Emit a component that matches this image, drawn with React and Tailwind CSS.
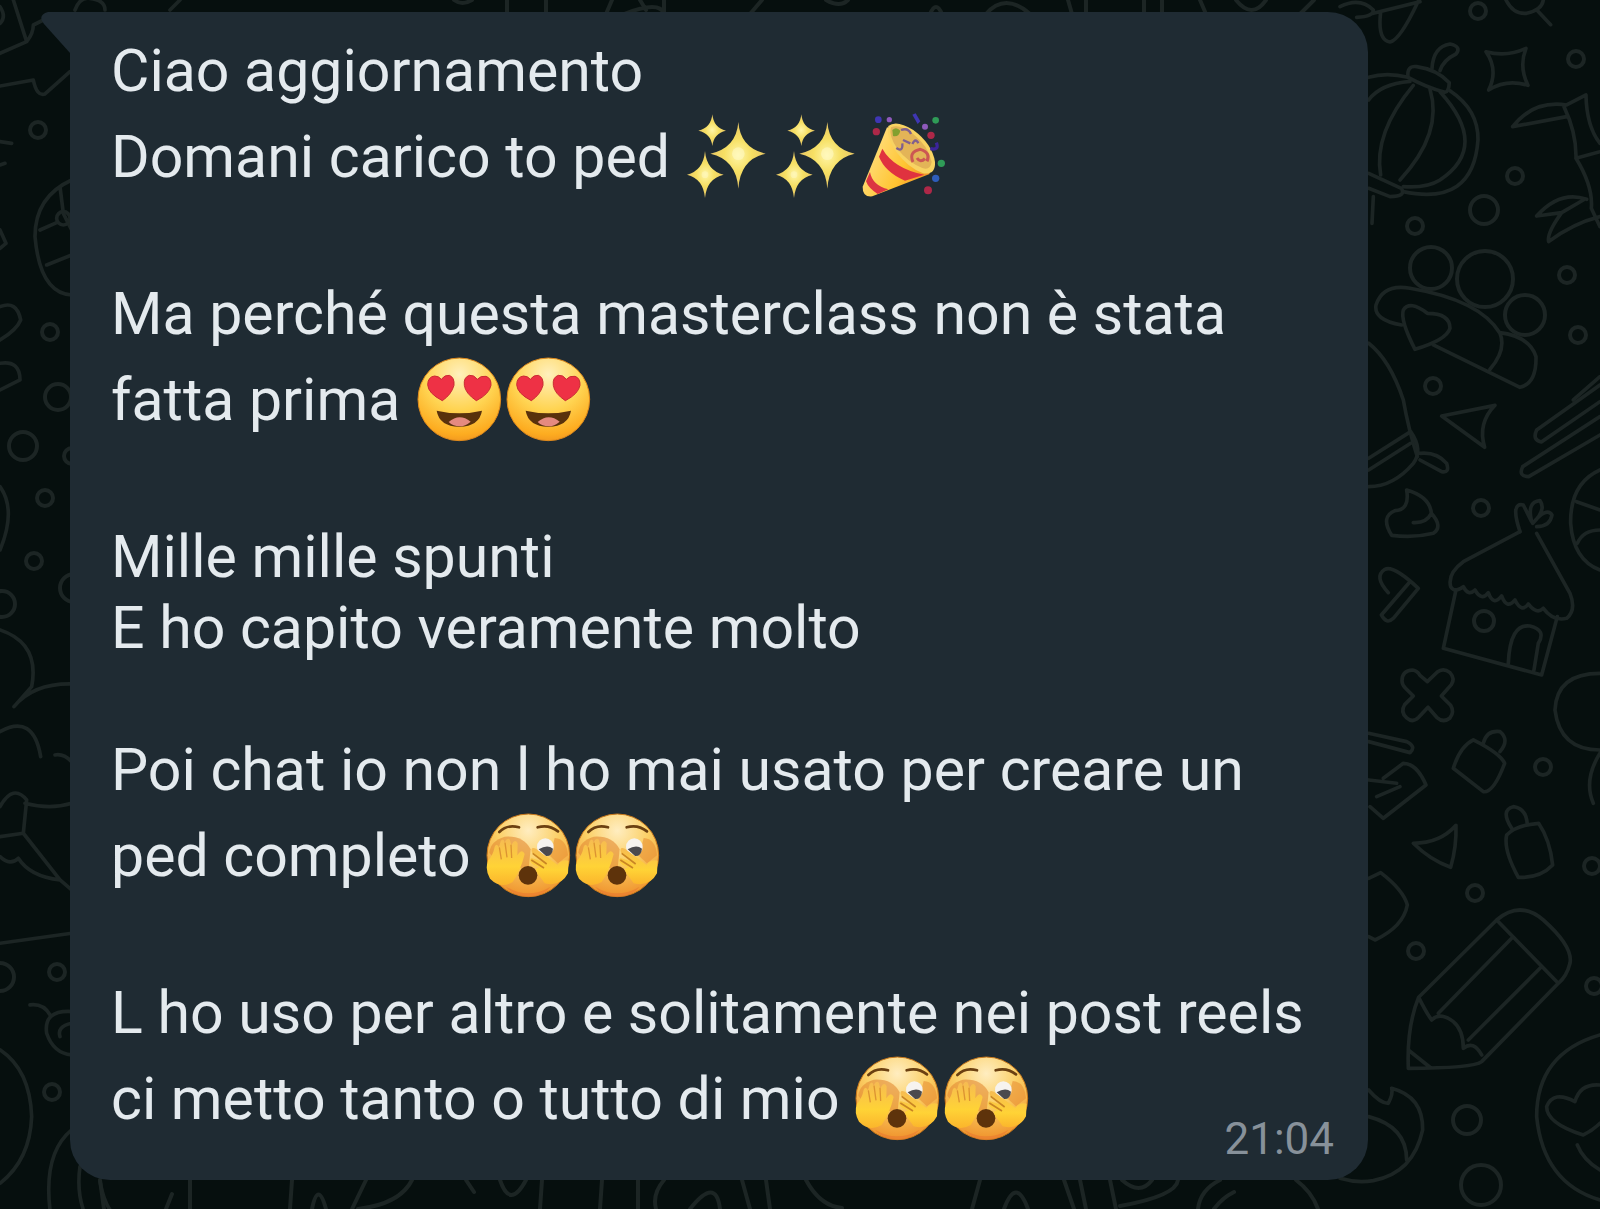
import React from 'react';

const message = [
    { text: 'Ciao aggiornamento' },
    { text: 'Domani carico to ped ', emojis: ['sparkles', 'sparkles', 'party'] },
    { text: '' },
    { text: 'Ma perché questa masterclass non è stata' },
    { text: 'fatta prima ', emojis: ['hearts', 'hearts'] },
    { text: '' },
    { text: 'Mille mille spunti' },
    { text: 'E ho capito veramente molto' },
    { text: '' },
    { text: 'Poi chat io non l ho mai usato per creare un' },
    { text: 'ped completo ', emojis: ['peeking', 'peeking'] },
    { text: '' },
    { text: 'L ho uso per altro e solitamente nei post reels' },
    { text: 'ci metto tanto o tutto di mio ', emojis: ['peeking', 'peeking'] }
];

function Sparkles() {
    return (
        <g transform="translate(-30 -38)" fill="url(#star)">
            <path d="M190 68 Q196 146 272 163 Q196 180 190 268 Q184 180 106 163 Q184 146 190 68Z" />
            <path d="M90 155 Q95 214 146 226 Q95 238 90 296 Q85 238 36 226 Q85 214 90 155Z" />
            <path d="M112 45 Q116 86 153 94 Q116 102 112 140 Q108 102 70 94 Q108 86 112 45Z" />
            <circle cx="190" cy="163" r="19" fill="#fffbd0" opacity="0.5" />
            <circle cx="90" cy="226" r="10" fill="#fffbd0" opacity="0.4" />
        </g>
    );
}

function Party() {
    return (
        <g transform="translate(-564 -38)">
            <path d="M636 84 L563 262 Q562 294 592 291 L764 224 Q735 110 636 84Z" fill="url(#cone)" />
            <path d="M612 172 Q630 218 690 244 L748 226 Q656 208 622 148Z" fill="#e0323f" />
            <path d="M585 218 Q592 258 640 270 L608 284 Q580 266 573 246Z" fill="#dc3442" />
            <path d="M640 80 Q664 60 715 92 Q772 134 780 188 Q782 228 744 222 Q700 206 664 158 Q632 112 640 80Z" fill="#f8d362" />
            <path d="M648 84 Q672 72 712 102 Q762 142 770 188 Q766 214 742 206 Q700 190 668 150 Q640 110 648 84Z" fill="#e3b457" />
            <path d="M652 92 Q664 80 676 94 Q672 114 654 110Z" fill="#83a02e" />
            <path d="M678 92 Q700 84 708 104 M664 146 Q684 160 682 132 M684 122 L706 132 M712 134 Q722 114 730 132" fill="none" stroke="#80608e" strokeWidth="7" />
            <path d="M714 188 Q700 158 736 150 Q768 160 756 186 M726 176 Q736 192 750 178" fill="none" stroke="#cc5753" strokeWidth="9" />
            <path d="M766 148 Q794 154 784 130" fill="none" stroke="#3b249a" strokeWidth="10" />
            <g fill="#3f36b4">
                <circle cx="610" cy="61" r="10" />
                <path d="M712 46 L722 42 L736 66 L728 74Z" />
                <circle cx="782" cy="237" r="11" fill="#2e5dba" />
            </g>
            <g fill="#8f5abc">
                <circle cx="643" cy="61" r="8" />
                <circle cx="750" cy="82" r="9" />
            </g>
            <g fill="#2f9b57">
                <circle cx="782" cy="63" r="10" />
                <circle cx="799" cy="192" r="11" />
            </g>
            <g fill="#ad2848">
                <circle cx="604" cy="97" r="11" />
                <circle cx="768" cy="108" r="11" />
                <circle cx="759" cy="273" r="12" />
            </g>
        </g>
    );
}

function Hearts() {
    return (
        <g transform="translate(-45 -29)">
            <circle cx="178" cy="162" r="124" fill="url(#face)" stroke="#e08a1c" strokeWidth="3" />
            <g fill="#ee3145" stroke="#c92b32" strokeWidth="3">
                <path d="M127 166 Q84 144 83 118 Q84 94 104 92 Q116 92 124 102 Q134 88 148 90 Q164 96 162 120 Q154 148 127 166Z" />
                <path d="M229 166 Q196 144 193 120 Q190 96 208 90 Q222 88 232 102 Q242 90 258 93 Q274 98 273 120 Q268 146 229 166Z" />
            </g>
            <path d="M110 196 Q178 212 246 196 Q238 243 178 244 Q118 243 110 196Z" fill="#59310c" />
            <path d="M146 230 Q178 202 212 229 Q196 243 178 243 Q160 243 146 230Z" fill="#e58a80" />
        </g>
    );
}

function Peeking() {
    return (
        <g transform="translate(-45 -35)">
            <circle cx="175" cy="168" r="124" fill="url(#peek)" stroke="#c9781b" strokeWidth="3" />
            <path d="M58 160 Q62 124 104 112 Q160 108 182 150 L176 206 Q90 210 58 160Z" fill="#e28a33" opacity="0.6" />
            <path d="M254 116 Q290 118 294 168 L264 192 L240 170Z" fill="#e88f35" opacity="0.6" />
            <path d="M88 98 Q112 74 147 84 M203 84 Q236 74 264 96" fill="none" stroke="#6b4011" strokeWidth="8" strokeLinecap="round" />
            <ellipse cx="226" cy="143" rx="25" ry="26" fill="#f6f3ef" />
            <path d="M206 150 Q232 134 249 148 Q246 172 228 170Z" fill="#4b4a4e" />
            <ellipse cx="174" cy="228" rx="28" ry="28" fill="#5e330b" />
            <path d="M54 184 Q70 166 74 142 Q80 130 87 144 L92 126 Q100 114 104 130 L108 122 Q119 112 122 130 L124 138 Q135 116 143 132 L142 168 Q156 146 164 164 Q152 214 128 248 Q92 270 60 238 Q44 210 54 184Z" fill="url(#hand)" />
            <path d="M88 144 L94 180 M105 130 L111 174 M123 136 L125 176" fill="none" stroke="#dc9432" strokeWidth="4" />
            <path d="M296 184 Q276 178 262 196 L198 148 Q180 140 186 160 L222 188 L184 176 Q174 184 190 196 L208 204 Q190 206 204 224 L224 252 Q272 264 294 222Z" fill="url(#hand)" />
            <path d="M188 162 L230 194 M184 182 L222 206" fill="none" stroke="#c98524" strokeWidth="5" />
            <path d="M108 262 Q174 302 242 262 Q220 292 175 292 Q130 292 108 262Z" fill="#ea7d30" opacity="0.7" />
        </g>
    );
}

const emojiTypes = {
    sparkles: { label: '✨', Drawing: Sparkles },
    party: { label: '🎉', Drawing: Party },
    hearts: { label: '😍', Drawing: Hearts },
    peeking: { label: '🫣', Drawing: Peeking }
};

function Emoji({ name }) {
    const { label, Drawing } = emojiTypes[name];
    return (
        <svg role="img" aria-label={label} viewBox="0 0 267 267" className="h-[89px] w-[89px] shrink-0 overflow-visible">
            <Drawing />
        </svg>
    );
}

// Small rings scattered between the bigger doodles: [cx, cy, r]
const rings = [
    [1478, 11, 8], [1576, 59, 8], [1515, 176, 8], [1484, 210, 14], [1415, 226, 8],
    [1567, 275, 8], [1578, 335, 8], [1433, 386, 8], [1481, 508, 8], [1543, 767, 8],
    [1592, 866, 8], [1475, 893, 8], [1416, 951, 8], [1594, 986, 8], [1467, 1120, 14],
    [1481, 1185, 20], [1431, 268, 21], [1485, 279, 28], [1525, 315, 20], [1484, 621, 10],
    [38, 130, 8], [50, 332, 8], [58, 397, 13], [23, 446, 14], [45, 498, 8],
    [34, 561, 8], [2, 604, 13], [74, 588, 14], [57, 972, 8], [0, 977, 14],
    [52, 1092, 8], [72, 456, 8]
];

function Wallpaper() {
    return (
        <svg
            width="1600"
            height="1209"
            fill="none"
            stroke="#1c2524"
            strokeWidth="4"
            strokeLinecap="round"
            strokeLinejoin="round"
            className="absolute top-0 left-0"
            aria-hidden="true"
        >
            <defs>
                <radialGradient id="star">
                    <stop offset="0" stopColor="#fff6a8" />
                    <stop offset="0.5" stopColor="#f6df63" />
                    <stop offset="1" stopColor="#e8c765" />
                </radialGradient>
                <linearGradient id="cone" x1="0" y1="0.3" x2="1" y2="0.8">
                    <stop offset="0" stopColor="#ffe288" />
                    <stop offset="0.6" stopColor="#ffc431" />
                    <stop offset="1" stopColor="#ee8b25" />
                </linearGradient>
                <radialGradient id="face" cx="0.5" cy="0.2" r="0.85">
                    <stop offset="0" stopColor="#fff0bd" />
                    <stop offset="0.5" stopColor="#ffd452" />
                    <stop offset="0.85" stopColor="#fdac20" />
                    <stop offset="1" stopColor="#ee9020" />
                </radialGradient>
                <radialGradient id="peek" cx="0.5" cy="0.2" r="0.85">
                    <stop offset="0" stopColor="#ffedc0" />
                    <stop offset="0.45" stopColor="#fbcf64" />
                    <stop offset="1" stopColor="#ee8b25" />
                </radialGradient>
                <linearGradient id="hand" x1="0" y1="0" x2="0" y2="1">
                    <stop offset="0" stopColor="#f6bb52" />
                    <stop offset="0.6" stopColor="#ffd336" />
                    <stop offset="1" stopColor="#fbb52c" />
                </linearGradient>
            </defs>

            {rings.map(([cx, cy, r]) => (
                <circle key={`${cx}-${cy}`} cx={cx} cy={cy} r={r} />
            ))}

            {/* right side, top */}
            <g transform="translate(1340 0) scale(0.3333)" strokeWidth="11">
                <path d="M0 20 Q60 -10 100 30 Q100 50 50 52 M100 40 L240 5 M122 36 Q112 120 150 126 Q180 120 234 5" />
                <path d="M498 0 Q520 44 560 40 Q606 30 610 0 M594 34 L632 74" />
                <path d="M438 155 Q500 172 558 145 Q536 200 564 256 Q500 236 446 270 Q476 210 438 155Z" />
                <path d="M276 205 Q280 140 330 132 Q366 140 348 162 Q310 180 300 212" />
                <path d="M204 232 Q200 196 230 200 Q290 208 328 248 Q326 280 312 276 Q260 262 204 232Z" />
                <path d="M86 232 Q140 216 204 232 M86 300 Q120 252 210 244 M220 256 Q100 400 122 525 M270 268 Q310 400 180 540 M300 275 Q450 440 300 540 Q260 565 190 560 M330 272 Q416 330 414 420 Q400 620 190 575" />
                <path d="M86 520 L184 565 Q200 590 150 590 L86 565 M100 590 L96 670" />
                <path d="M518 380 Q580 300 680 315 L738 285 Q740 380 780 430 M518 380 L680 350 M672 320 Q710 400 708 475 L780 455 M708 475 Q760 560 754 625 M590 648 Q660 570 740 598 M590 648 L665 638 Q620 700 626 725 Q700 670 780 650 M665 638 L730 600 M754 625 L780 680" />
                <path d="M185 975 Q100 960 108 915 Q130 850 210 865 Q420 900 480 1000 Q500 1050 450 1108 M280 1035 L540 1162 Q590 1150 588 1070 Q570 1010 480 998" />
                <path d="M225 1048 Q180 960 190 930 Q210 900 262 940 Q330 940 330 985 Q320 1020 225 1048Z" />
                <path d="M86 1030 Q150 1080 190 1200 Q206 1290 232 1370 M700 1200 L780 1130" />
            </g>

            {/* right side, middle */}
            <g transform="translate(1340 380) scale(0.3333)" strokeWidth="11">
                <path d="M305 108 L465 76 Q412 130 434 202Z" />
                <path d="M780 15 L590 150 Q576 180 604 186 L780 65 M780 110 L548 260 Q534 290 566 290 L780 165" />
                <path d="M86 235 L212 155 Q250 210 220 250 Q160 320 86 320 M86 270 L212 190 M240 220 Q290 215 320 250 Q330 280 305 275 L240 240" />
                <path d="M200 330 Q270 350 274 400 Q310 440 280 460 Q220 475 155 466 Q120 410 165 392 Q210 390 200 330Z M220 428 Q260 430 274 400" />
                <path d="M145 638 Q100 590 135 568 Q160 555 235 625 L160 715 Q140 735 124 705 L206 610" />
                <path d="M540 455 L370 545 Q322 580 332 620 Q345 640 370 620 Q385 650 405 630 Q425 665 445 638 Q460 680 485 648 Q500 690 525 660 Q545 700 565 672 Q590 705 610 685 Q640 725 680 715 Q710 690 690 640 L590 460" />
                <path d="M540 455 Q510 365 550 375 L575 425 Q560 365 600 362 Q620 390 578 430 Q620 380 636 405 Q630 440 590 440" />
                <path d="M348 630 L310 805 L605 885 L652 710 M505 850 Q510 730 570 738 Q620 750 595 790 L582 870" />
                <path d="M780 270 Q690 310 692 430 Q700 540 780 570 M710 365 L780 390 M712 490 Q730 450 780 450" />
                <path d="M186 902 Q186 872 218 870 Q232 872 240 886 L262 905 L292 876 Q310 862 330 878 Q346 896 334 914 L304 948 L332 976 Q344 996 330 1014 Q310 1030 290 1012 L264 982 L236 1012 Q218 1030 200 1014 Q180 996 194 974 L220 948 L196 924 Q186 914 186 902Z" />
                <path d="M780 880 Q650 880 645 990 Q660 1110 780 1110 M780 1120 Q730 1200 760 1270" />
                <path d="M86 1060 L200 1085 Q230 1100 210 1118 L86 1085 M130 1195 L190 1150 Q230 1150 258 1215 L130 1315 L90 1280 M86 1200 L170 1210 M110 1250 L180 1220" />
                <path d="M400 1080 Q360 1100 340 1165 L430 1235 Q460 1240 494 1150 Q480 1120 400 1080Z M430 1090 Q440 1050 480 1055 Q510 1080 480 1115" />
            </g>

            {/* right side, bottom */}
            <g transform="translate(1340 760) scale(0.3333)" strokeWidth="11">
                <path d="M220 250 Q300 250 348 196 Q350 260 332 322 Q270 300 220 250Z" />
                <path d="M515 205 Q480 150 520 140 Q560 145 562 195 M500 225 Q530 195 596 190 Q630 240 638 315 Q600 355 535 352 Q490 270 500 225Z" />
                <path d="M86 355 L122 338 Q190 390 202 435 Q190 500 105 540 L86 530" />
                <path d="M236 712 L470 480 Q540 420 610 480 Q700 560 690 610 Q680 650 655 670 L425 905 Q400 925 205 925 Q200 800 236 712Z M470 480 L655 670 M515 535 L295 760 M600 625 L385 840 M236 712 Q260 760 275 780 Q300 755 340 785 Q370 810 370 865 Q400 840 425 885 M205 870 L270 922" />
                <path d="M86 990 Q120 1030 145 1030 Q160 1000 155 985 Q250 1010 248 1110 Q220 1240 100 1262 Q50 1270 0 1255 M86 1070 Q200 1100 200 1200" />
                <path d="M780 825 Q590 880 590 1070 Q610 1270 780 1320 M780 975 Q720 970 705 1025 Q640 990 620 1040 Q620 1090 730 1125 Q760 1110 780 1090 M712 1155 Q730 1200 780 1230" />
            </g>

            {/* left side */}
            <g transform="scale(0.3333)" strokeWidth="11">
                <path d="M0 160 L80 125 L40 0 M80 125 Q100 100 100 75 L130 60 M0 258 L100 240 Q110 290 135 282 L210 215 M0 70 Q20 50 0 20" />
                <path d="M225 30 Q240 -10 270 -5 Q315 0 315 30 M510 30 L540 0" />
                <path d="M0 425 L35 430 M0 495 L15 490 M0 690 L18 730 L0 745" />
                <path d="M215 540 Q105 590 105 710 Q120 880 215 885 M180 560 L190 640 L215 690 M120 690 L170 668 M140 795 L215 765" />
                <circle cx="190" cy="655" r="20" />
                <path d="M0 920 Q50 900 62 960 Q50 990 0 1020 M0 1090 Q60 1080 60 1140 L0 1170" />
                <path d="M0 1460 Q50 1530 0 1650 M0 1890 Q120 1930 95 2060 L42 2120 Q100 2050 215 2052 M0 2195 Q100 2140 122 2270 M165 2265 Q190 2260 215 2285" />
                <path d="M0 2420 Q40 2350 80 2400 L70 2500 L0 2510 M75 2410 Q150 2430 215 2410 M70 2500 L180 2640 L215 2670 M0 2570 Q30 2600 55 2575 Q90 2630 180 2640" />
                <path d="M0 2830 L215 2800 M90 3015 Q130 3010 150 3045 M215 3035 Q130 3030 140 3100 Q160 3160 215 3165 M215 3070 Q170 3080 180 3110" />
                <path d="M0 3150 Q90 3210 95 3350 Q90 3480 0 3550 M215 3390 Q130 3460 150 3630 M240 3500 Q230 3570 250 3630 M300 3545 Q310 3600 330 3630" />
            </g>

            {/* strips above and below the bubble */}
            <path d="M507 0 V14 M546 0 V14 M606 14 L612 0 M624 14 Q660 0 664 14 M664 0 V14 M640 0 L646 10 M750 14 L762 0 M826 0 Q840 8 848 0 M930 14 Q936 0 942 14 M986 14 Q1005 -8 1030 14 M1068 0 L1072 14 M1086 0 V14 M1144 0 V14 M1162 0 V14 M1200 0 L1206 14 M1236 0 Q1252 20 1266 0 M1300 14 L1314 0 M454 0 Q462 6 472 0" />
            <path d="M100 1180 L104 1209 M190 1180 V1209 M166 1209 L172 1194 M292 1180 L290 1209 M312 1209 Q318 1180 326 1209 M352 1209 L366 1180 M412 1180 Q400 1204 358 1209 M466 1180 L474 1192 M500 1180 Q510 1210 526 1180 M542 1180 L540 1209 M602 1180 L600 1209 M638 1180 V1209 M656 1209 Q652 1194 664 1180 M690 1209 Q716 1176 720 1209 M742 1180 L750 1209 M766 1180 L770 1209 M806 1180 Q820 1206 842 1208 M980 1180 L972 1209 M1004 1209 Q1016 1176 1028 1209 M1064 1180 L1074 1209 M1080 1180 L1086 1209 M1110 1180 L1116 1209 M1122 1180 Q1140 1196 1152 1180 M1178 1180 Q1176 1196 1120 1206 M1198 1209 Q1200 1190 1220 1180 M1214 1209 Q1222 1198 1234 1192 M1296 1180 Q1312 1192 1318 1209" />
        </svg>
    );
}

function MessageLine({ text, emojis = [] }) {
    return (
        <p className={`flex items-center whitespace-pre ${emojis.length ? 'h-[101px]' : 'h-[71px]'}`}>
            <span>{text}</span>
            {emojis.map((name, i) => (
                <Emoji key={i} name={name} />
            ))}
        </p>
    );
}

function App() {
    return (
        <main className="relative min-h-screen overflow-hidden bg-[#060f0e] pt-3 pr-[232px] pb-7 pl-[70px] font-['Roboto',sans-serif]">
            <Wallpaper />

            <article className="relative rounded-[40px] rounded-tl-none bg-[#1f2b33] px-[41px] pt-[23px] pb-[31px] text-[59px] leading-[71px] text-[#e4eaee]">
                {/* bubble tail */}
                <svg viewBox="0 0 32 42" className="absolute top-0 -left-[30px] h-[42px] w-8" aria-hidden="true">
                    <path d="M32 0 H8 Q-3 3 4 12 L30 41 H32Z" fill="#1f2b33" />
                </svg>
                {message.map((line, i) => (
                    <MessageLine key={i} {...line} />
                ))}
                <time className="absolute right-[34px] bottom-[15px] text-[44px] leading-[52px] text-[#87919a]">21:04</time>
            </article>
        </main>
    );
}

export default App;
